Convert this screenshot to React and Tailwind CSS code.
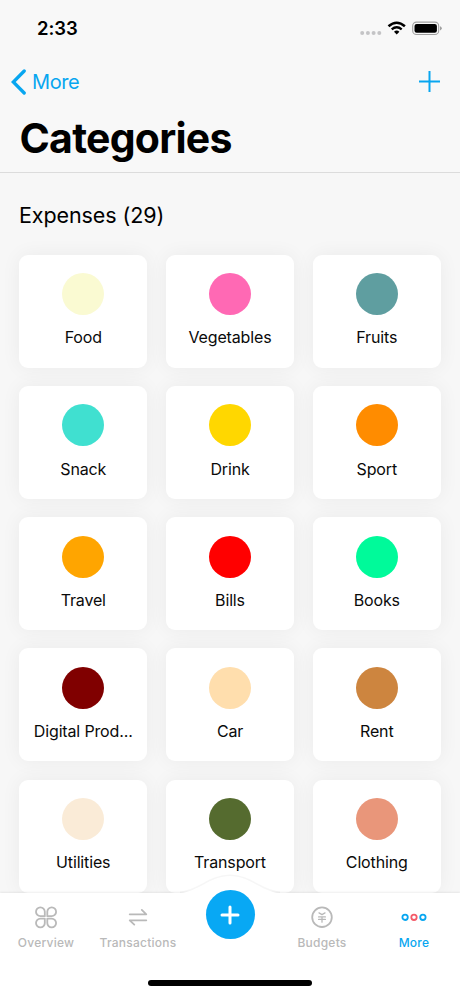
import React from 'react';

const categories = [
  { name: 'Food', color: 'bg-[#fafad2]' },
  { name: 'Vegetables', color: 'bg-[#ff69b4]' },
  { name: 'Fruits', color: 'bg-[#5f9ea0]' },
  { name: 'Snack', color: 'bg-[#40e0d0]' },
  { name: 'Drink', color: 'bg-[#ffd700]' },
  { name: 'Sport', color: 'bg-[#ff8c00]' },
  { name: 'Travel', color: 'bg-[#ffa500]' },
  { name: 'Bills', color: 'bg-[#ff0000]' },
  { name: 'Books', color: 'bg-[#00fa9a]' },
  { name: 'Digital Prod...', color: 'bg-[#800000]' },
  { name: 'Car', color: 'bg-[#ffdead]' },
  { name: 'Rent', color: 'bg-[#cd853f]' },
  { name: 'Utilities', color: 'bg-[#faebd7]' },
  { name: 'Transport', color: 'bg-[#556b2f]' },
  { name: 'Clothing', color: 'bg-[#e9967a]' },
];

function StatusBar() {
  return (
    <div className="flex h-[56px] items-center justify-between pl-[37px] pr-[18px]">
      <span className="pt-px text-[18.5px] font-semibold leading-none tracking-[-0.1px]">2:33</span>
      <svg width="84" height="16" viewBox="0 0 84 16" className="shrink-0">
        <g fill="#c4c4c6">
          <circle cx="4.2" cy="13" r="2" />
          <circle cx="9.9" cy="13" r="2" />
          <circle cx="15.6" cy="13" r="2" />
          <circle cx="21.3" cy="13" r="2" />
        </g>
        <g transform="translate(38.7 14.5)">
          <path d="M0 0 L-2.7 -2.8 Q0 -5 2.7 -2.8 Z" />
          <path d="M-5 -5.1 Q0 -9.3 5 -5.1" fill="none" stroke="#000" strokeWidth="2.3" />
          <path d="M-8.2 -8.3 Q0 -15.2 8.2 -8.3" fill="none" stroke="#000" strokeWidth="2.6" />
        </g>
        <rect x="54.7" y="2.1" width="26" height="12.4" rx="3.8" fill="none" stroke="#a0a0a0" strokeWidth="1.1" />
        <rect x="56.5" y="3.9" width="22.4" height="8.8" rx="2.2" />
        <path d="M82 6.2 Q83.8 6.8 83.8 8.3 Q83.8 9.8 82 10.4 Z" fill="#a0a0a0" />
      </svg>
    </div>
  );
}

function Header() {
  return (
    <header className="h-[173px] shrink-0 border-b border-[#dcdcdc] bg-[#f8f8f8]">
      <StatusBar />
      <div className="flex h-[51px] items-center justify-between pl-[11px] pr-[20px] text-[#08a6f0]">
        <button className="flex items-center gap-[6px]">
          <svg width="15" height="26" viewBox="0 0 15 26" fill="none" stroke="currentColor" strokeWidth="3.3" strokeLinecap="round" strokeLinejoin="miter">
            <path d="M13.2 2 L2.3 13 L13.2 24" />
          </svg>
          <span className="text-[20px] leading-none tracking-[-0.4px]">More</span>
        </button>
        <svg width="21" height="22" viewBox="0 0 21 22" stroke="currentColor" strokeWidth="2">
          <path d="M10.5 0 V21 M0 10.5 H21" />
        </svg>
      </div>
      <h1 className="pl-[19.5px] pt-[7px] text-[41px] font-bold leading-[48px] tracking-[-0.75px]">Categories</h1>
    </header>
  );
}

function CategoryCard({ name, color }) {
  return (
    <div className="flex h-[113px] flex-col items-center rounded-[9px] bg-white pt-[18.5px] shadow-[0_0_20px_rgba(0,0,0,0.055)]">
      <div className={`h-[42px] w-[42px] rounded-full ${color}`} />
      <span className="mt-[12.2px] whitespace-nowrap text-[16px] leading-[20px] tracking-[-0.15px] text-[#0a0a0a]">{name}</span>
    </div>
  );
}

function Tab({ label, active, children }) {
  return (
    <div className={`flex flex-col items-center pt-[12px] ${active ? 'text-[#08a6f0]' : 'text-[#b9b9b9]'}`}>
      <svg width="28" height="24" viewBox="0 0 28 24" fill="none" stroke="currentColor" strokeWidth="1.8" strokeLinecap="round" strokeLinejoin="round">
        {children}
      </svg>
      <span className="mt-[6px] text-[12px] font-medium leading-[16px] tracking-[0.25px]">{label}</span>
    </div>
  );
}

function TabBar() {
  return (
    <nav className="relative h-[103px] shrink-0 bg-white shadow-[0_-1px_2px_rgba(0,0,0,0.07)]">
      {/* raised hump behind the add button */}
      <svg className="absolute left-[180px] top-[-19px] overflow-visible" width="100" height="24" viewBox="0 0 100 24">
        <path d="M0 19 C18 18 30 2 50 2 C70 2 82 18 100 19" fill="none" stroke="#000" strokeOpacity="0.035" strokeWidth="3" />
        <path d="M0 19 C18 18 30 2 50 2 C70 2 82 18 100 19 V24 H0 Z" fill="#fff" />
      </svg>
      <div className="relative grid grid-cols-5">
        <Tab label="Overview">
          <path d="M12.8 11.2 H8.5 A4.4 4.4 0 1 1 12.8 6.8 Z" />
          <path d="M15.3 11.2 V6.8 A4.4 4.4 0 1 1 19.6 11.2 Z" />
          <path d="M12.8 13.6 V17.9 A4.4 4.4 0 1 1 8.5 13.6 Z" />
          <path d="M15.3 13.6 H19.6 A4.4 4.4 0 1 1 15.3 17.9 Z" />
        </Tab>
        <Tab label="Transactions">
          <path d="M5.7 9.3 H22.3 L17.8 4.9 M22.3 15.3 H5.7 L10.3 19.6" />
        </Tab>
        <div className="flex justify-center">
          <button className="-mt-[3px] flex h-[49px] w-[49px] items-center justify-center rounded-full bg-[#08a8f4]">
            <svg width="20" height="20" viewBox="0 0 20 20" stroke="#fff" strokeWidth="3" strokeLinecap="round">
              <path d="M10 2 V18 M2 10 H18" />
            </svg>
          </button>
        </div>
        <Tab label="Budgets">
          <circle cx="14" cy="12.2" r="9.8" />
          <path d="M11 7.9 L14 9.6 L17 7.9 M10.6 11.9 H17.4 M10.6 14.4 H17.4 M14 11.9 V17.2" strokeWidth="1.3" />
        </Tab>
        <Tab label="More" active>
          <circle cx="5.1" cy="12.3" r="2.7" />
          <circle cx="14" cy="12.3" r="2.7" stroke="#f45b69" />
          <circle cx="22.9" cy="12.3" r="2.7" />
        </Tab>
      </div>
      <div className="absolute bottom-[10px] left-[148px] h-[6px] w-[164px] rounded-full bg-black" />
    </nav>
  );
}

export default function App() {
  return (
    <div className="flex h-[996px] w-[460px] flex-col overflow-hidden bg-[#f7f7f7] font-['Inter',sans-serif] text-black">
      <Header />
      <main className="min-h-0 flex-1 overflow-hidden px-[19px]">
        <h2 className="pt-[28px] text-[21.5px] leading-[28px] tracking-[-0.1px]">Expenses (29)</h2>
        <div className="mt-[25.8px] grid grid-cols-3 gap-x-[18.3px] gap-y-[18.2px]">
          {categories.map((category) => (
            <CategoryCard key={category.name} {...category} />
          ))}
        </div>
      </main>
      <TabBar />
    </div>
  );
}
